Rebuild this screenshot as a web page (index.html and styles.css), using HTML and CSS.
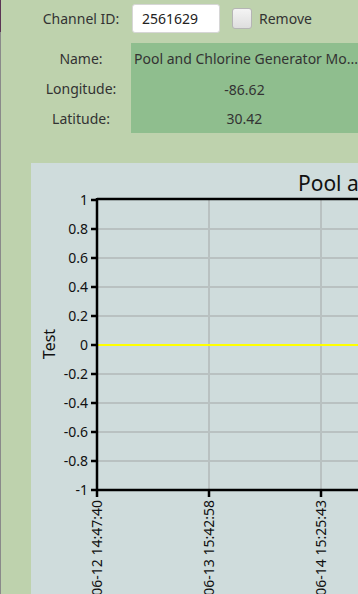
FILE: index.html
```html
<!DOCTYPE html>
<html>
<head>
<meta charset="utf-8">
<link rel="stylesheet" href="styles.css">
</head>
<body>
<div class="app">
  <div class="strip"></div>
  <main class="content">
    <div class="channel-row">
      <label class="label">Channel ID:</label>
      <div class="id-input">2561629</div>
      <span class="checkbox"></span>
      <span class="check-text">Remove</span>
    </div>
    <div class="info">
      <div class="label">Name:</div>
      <div class="value value-name">Pool and Chlorine Generator Mo...</div>
      <div class="label">Longitude:</div>
      <div class="value">-86.62</div>
      <div class="label">Latitude:</div>
      <div class="value">30.42</div>
    </div>
    <section class="chart">
      <svg class="plot" width="327" height="431" viewBox="0 0 327 431">
        <g transform="translate(-31 -163)">
          <text class="title" x="298" y="191">Pool and Chlorine Generator Monitor</text>
          <g class="grid">
            <line x1="97" y1="229" x2="358" y2="229"/>
            <line x1="97" y1="258" x2="358" y2="258"/>
            <line x1="97" y1="287" x2="358" y2="287"/>
            <line x1="97" y1="316" x2="358" y2="316"/>
            <line x1="97" y1="374" x2="358" y2="374"/>
            <line x1="97" y1="403" x2="358" y2="403"/>
            <line x1="97" y1="432" x2="358" y2="432"/>
            <line x1="97" y1="461" x2="358" y2="461"/>
            <line x1="209" y1="200" x2="209" y2="490"/>
            <line x1="321" y1="200" x2="321" y2="490"/>
          </g>
          <line class="series" x1="97" y1="345" x2="358" y2="345"/>
          <g class="axis">
            <line x1="97" y1="199" x2="358" y2="199"/>
            <line x1="97" y1="490" x2="358" y2="490"/>
            <line x1="97" y1="198" x2="97" y2="497"/>
            <line x1="91" y1="200" x2="97" y2="200"/>
            <line x1="91" y1="229" x2="97" y2="229"/>
            <line x1="91" y1="258" x2="97" y2="258"/>
            <line x1="91" y1="287" x2="97" y2="287"/>
            <line x1="91" y1="316" x2="97" y2="316"/>
            <line x1="91" y1="345" x2="97" y2="345"/>
            <line x1="91" y1="374" x2="97" y2="374"/>
            <line x1="91" y1="403" x2="97" y2="403"/>
            <line x1="91" y1="432" x2="97" y2="432"/>
            <line x1="91" y1="461" x2="97" y2="461"/>
            <line x1="91" y1="490" x2="97" y2="490"/>
            <line x1="209" y1="490" x2="209" y2="497"/>
            <line x1="321" y1="490" x2="321" y2="497"/>
          </g>
          <g class="ylabels">
            <text x="88" y="205">1</text>
            <text x="88" y="234">0.8</text>
            <text x="88" y="263">0.6</text>
            <text x="88" y="292">0.4</text>
            <text x="88" y="321">0.2</text>
            <text x="88" y="350">0</text>
            <text x="88" y="379">-0.2</text>
            <text x="88" y="408">-0.4</text>
            <text x="88" y="437">-0.6</text>
            <text x="88" y="466">-0.8</text>
            <text x="88" y="495">-1</text>
          </g>
          <text class="ytitle" transform="translate(55 344) rotate(-90)">Test</text>
          <g class="xlabels">
            <text transform="translate(102 500) rotate(-90)">2023-06-12 14:47:40</text>
            <text transform="translate(214 500) rotate(-90)">2023-06-13 15:42:58</text>
            <text transform="translate(326 500) rotate(-90)">2023-06-14 15:25:43</text>
          </g>
        </g>
      </svg>
    </section>
  </main>
</div>
</body>
</html>
```

FILE: styles.css
```css
* { box-sizing: border-box; }
html, body {
  margin: 0;
  padding: 0;
  width: 358px;
  height: 594px;
  overflow: hidden;
  background: #bed2ad;
}
.app {
  display: flex;
  height: 594px;
  font-family: "Noto Sans", "Open Sans", sans-serif;
  font-size: 14px;
  color: #333;
}
.strip {
  width: 1px;
  flex: none;
  background: linear-gradient(#5b3455 0 32px, #8a8a8a 32px);
}
.content {
  flex: 1;
  min-width: 0;
  display: flex;
  flex-direction: column;
  padding-left: 30px;
  padding-top: 4px;
}
.channel-row {
  display: flex;
  align-items: center;
  height: 29px;
}
.label {
  width: 100px;
  text-align: center;
  color: #333;
}
.id-input {
  margin-left: 1px;
  width: 88px;
  height: 29px;
  background: #fff;
  border: 1px solid #d6d6d6;
  border-radius: 3px;
  padding-left: 9px;
  line-height: 27px;
  color: #222;
}
.checkbox {
  margin-left: 12px;
  width: 20px;
  height: 21px;
  border: 1px solid #b5b5b5;
  border-radius: 3px;
  background: linear-gradient(#f4f4f4, #dedede);
}
.check-text {
  margin-left: 7px;
  color: #333;
}
.info {
  margin-top: 10px;
  display: grid;
  grid-template-columns: 100px 227px;
  grid-template-rows: 31px 30px 29px;
  align-items: center;
}
.info .label { line-height: 1; }
.value {
  background: #8fbe8e;
  height: 100%;
  display: flex;
  align-items: center;
  justify-content: center;
  color: #333;
  white-space: nowrap;
  overflow: hidden;
}
.value-name {
  justify-content: flex-start;
  padding-left: 3px;
}
.chart {
  margin-top: 30px;
  flex: 1;
  background: #cfdcdc;
  overflow: hidden;
}
.plot { display: block; }
.plot text {
  font-family: "Noto Sans", "Open Sans", sans-serif;
  fill: #111;
}
.title { font-size: 21px; }
.grid line { stroke: #b9c1c1; stroke-width: 2; }
.series { stroke: #ffff00; stroke-width: 2; }
.axis line { stroke: #000; stroke-width: 2.5; }
.ylabels text { font-size: 14px; text-anchor: end; }
.ytitle { font-size: 16px; text-anchor: middle; }
.xlabels text { font-size: 14px; text-anchor: end; }
```
